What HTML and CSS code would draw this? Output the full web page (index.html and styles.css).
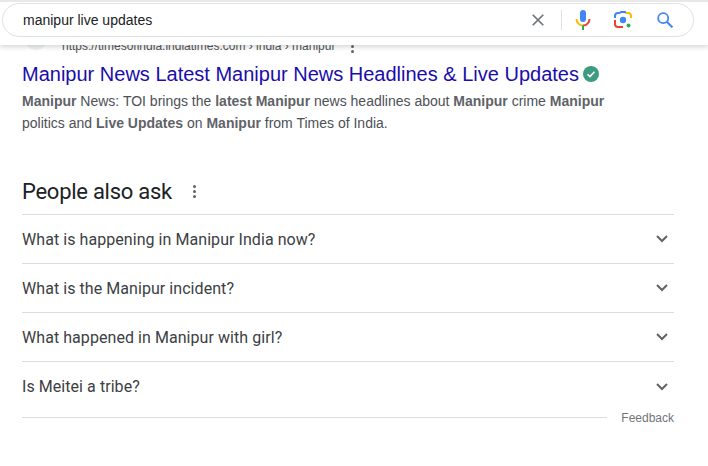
FILE: index.html
```html
<!DOCTYPE html>
<html lang="en">
<head>
<meta charset="utf-8">
<title>manipur live updates</title>
<link rel="stylesheet" href="styles.css">
</head>
<body>
<header class="header">
  <div class="searchbox">
    <span class="query">manipur live updates</span>
    <div class="tools">
      <svg class="ic-x" width="14" height="14" viewBox="0 0 16 16"><path d="M2 2l12 12M14 2L2 14" stroke="#70757a" stroke-width="2" fill="none"/></svg>
      <span class="sep"></span>
      <svg class="ic-mic" width="16" height="22" viewBox="0 0 16 22"><rect x="5" y="1" width="6" height="12" rx="3" fill="#4285f4"/><path d="M1.500 10a6.500 6.500 0 0 0 6.500 6.500" stroke="#fbbc04" stroke-width="2" fill="none"/><path d="M8 16.500a6.500 6.500 0 0 0 6.500-6.500" stroke="#ea4335" stroke-width="2" fill="none"/><rect x="7" y="16.500" width="2" height="4.500" fill="#34a853"/></svg>
      <svg class="ic-lens" width="18" height="18" viewBox="0 0 18 18"><path d="M1 7V5a3 3 0 0 1 3-3h2" stroke="#4285f4" stroke-width="2" fill="none"/><path d="M6 2l1-1h4l1 1" stroke="#4285f4" stroke-width="2" fill="none"/><path d="M12 2h2a3 3 0 0 1 3 3v2" stroke="#fbbc04" stroke-width="2" fill="none"/><path d="M1 9v4a3 3 0 0 0 3 3h5" stroke="#ea4335" stroke-width="2" fill="none"/><circle cx="9" cy="9" r="3.200" fill="#4285f4"/><circle cx="14.500" cy="14.500" r="2" fill="#34a853"/></svg>
      <svg class="ic-search" width="16" height="16" viewBox="0 0 16 16"><circle cx="6.200" cy="6.200" r="5" stroke="#4285f4" stroke-width="1.800" fill="none"/><path d="M9.800 9.800l5.600 5.600" stroke="#4285f4" stroke-width="2" fill="none"/></svg>
    </div>
  </div>
</header>
<main class="main">
  <div class="cite">
    <span class="favicon"></span>
    <span class="url">https://timesofindia.indiatimes.com › india › manipur</span>
    <span class="dots cite-dots"><i></i><i></i><i></i></span>
  </div>
  <h3 class="title"><span>Manipur News Latest Manipur News Headlines &amp; Live Updates</span>
    <svg class="verified" width="16" height="16" viewBox="0 0 16 16"><circle cx="8" cy="8" r="8" fill="#3d9c80"/><path d="M4.500 8.300l2.400 2.300 4.600-4.800" stroke="#fff" stroke-width="1.500" fill="none"/></svg>
  </h3>
  <p class="snippet"><b>Manipur</b> News: TOI brings the <b>latest Manipur</b> news headlines about <b>Manipur</b> crime <b>Manipur</b><br>politics and <b>Live Updates</b> on <b>Manipur</b> from Times of India.</p>
  <div class="paa-head">
    <h2 class="paa-title">People also ask</h2>
    <span class="dots"><i></i><i></i><i></i></span>
  </div>
  <ul class="paa-list">
    <li class="paa-item"><span>What is happening in Manipur India now?</span><svg class="chev" width="12" height="8" viewBox="0 0 12 8"><path d="M1 1l5 5 5-5" stroke="#5f6368" stroke-width="2" fill="none"/></svg></li>
    <li class="paa-item"><span>What is the Manipur incident?</span><svg class="chev" width="12" height="8" viewBox="0 0 12 8"><path d="M1 1l5 5 5-5" stroke="#5f6368" stroke-width="2" fill="none"/></svg></li>
    <li class="paa-item"><span>What happened in Manipur with girl?</span><svg class="chev" width="12" height="8" viewBox="0 0 12 8"><path d="M1 1l5 5 5-5" stroke="#5f6368" stroke-width="2" fill="none"/></svg></li>
    <li class="paa-item"><span>Is Meitei a tribe?</span><svg class="chev" width="12" height="8" viewBox="0 0 12 8"><path d="M1 1l5 5 5-5" stroke="#5f6368" stroke-width="2" fill="none"/></svg></li>
  </ul>
  <div class="feedback"><span class="rule"></span><span class="fb-text">Feedback</span></div>
</main>
</body>
</html>
```
FILE: styles.css
```css
* { box-sizing: border-box; }
html, body { margin: 0; padding: 0; background: #fff; overflow: hidden; height: 100%; }
body { font-family: "Liberation Sans", Arial, sans-serif; position: relative; }

.header {
  position: absolute; top: 0; left: 0; right: 0; height: 45px;
  background: #fff; box-shadow: 0 2px 5px rgba(60,64,67,.22);
  border-top: 2px solid #e8e8e8; padding: 1px 14px 0 2px; z-index: 2;
}
.searchbox {
  height: 34px; border: 1px solid #dfe1e5; border-radius: 17px;
  display: flex; align-items: center; justify-content: space-between;
  padding-left: 20px; background: #fff;
}
.query { font-size: 14px; color: #202124; }
.tools { display: flex; align-items: center; padding-right: 20px; }
.sep { width: 1px; height: 20px; background: #dfe1e5; margin: 0 13px 0 16px; }
.ic-mic { margin-right: 23px; }
.ic-lens { margin-right: 25px; }

.main { width: 674px; padding: 36px 0 0 22px; }
.cite { display: flex; align-items: center; height: 20px; font-size: 12px; color: #4d5156; }
.favicon { width: 22px; height: 22px; border-radius: 50%; background: #f1f3f4; margin: 0 15px 14px 3px; }
.url { white-space: nowrap; }
.dots { display: inline-flex; flex-direction: column; gap: 2px; }
.dots i { width: 3px; height: 3px; border-radius: 50%; background: #5f6368; display: block; }
.cite-dots { margin-left: 16px; }
.title {
  margin: 5px 0 0; font-weight: 400; font-size: 20px; line-height: 26px; color: #1a0dab;
  display: flex; align-items: center; gap: 4px; white-space: nowrap;
}
.snippet { margin: 3px 0 0; font-size: 14px; line-height: 22px; color: #4d5156; white-space: nowrap; }
.snippet b { color: #5f6368; }
.paa-head { display: flex; align-items: center; gap: 21px; margin-top: 39px; height: 36px; }
.paa-title { margin: 0; font-family: Roboto, sans-serif; font-weight: 400; font-size: 22px; letter-spacing: -.27px; color: #202124; }
.paa-list { list-style: none; margin: 5px 0 0; padding: 0; border-top: 1px solid #dadce0; }
.paa-item {
  height: 49px; border-bottom: 1px solid #dadce0;
  display: flex; align-items: center; justify-content: space-between;
  font-family: Roboto, sans-serif; font-size: 16px; letter-spacing: .06px; color: #3c4043; padding-right: 6px;
}
.paa-item:last-child { border-bottom: 0; }
.feedback { display: flex; align-items: center; gap: 14px; height: 14px; margin-top: 0; }
.rule { flex: 1; height: 1px; background: #dadce0; margin-bottom: 2px; }
.fb-text { font-size: 12px; color: #70757a; }
```
